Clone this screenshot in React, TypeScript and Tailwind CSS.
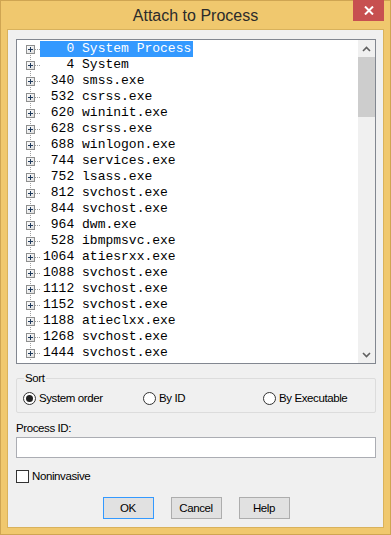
import React from 'react';

const processes: [number, string][] = [
  [0, 'System Process'],
  [4, 'System'],
  [340, 'smss.exe'],
  [532, 'csrss.exe'],
  [620, 'wininit.exe'],
  [628, 'csrss.exe'],
  [688, 'winlogon.exe'],
  [744, 'services.exe'],
  [752, 'lsass.exe'],
  [812, 'svchost.exe'],
  [844, 'svchost.exe'],
  [964, 'dwm.exe'],
  [528, 'ibmpmsvc.exe'],
  [1064, 'atiesrxx.exe'],
  [1088, 'svchost.exe'],
  [1112, 'svchost.exe'],
  [1152, 'svchost.exe'],
  [1188, 'atieclxx.exe'],
  [1268, 'svchost.exe'],
  [1444, 'svchost.exe'],
];

const uiFont = "font-['Liberation_Sans',Arial,sans-serif] text-[11.5px] tracking-[-0.4px]";

// tree gutter: expander box + dotted connectors
const TreeGutter: React.FC<{ first: boolean }> = ({ first }) => (
  <svg width="23" height="16" className="shrink-0">
    <line x1="13.5" y1={first ? 12 : 0} x2="13.5" y2="16" stroke="#a0a0a0" strokeDasharray="1 1" />
    <line x1="18" y1="8.5" x2="23" y2="8.5" stroke="#a0a0a0" strokeDasharray="1 1" />
    <defs>
      <linearGradient id="bx" x1="0" y1="0" x2="1" y2="1">
        <stop offset="0" stopColor="#ffffff" />
        <stop offset="1" stopColor="#dcdcdc" />
      </linearGradient>
    </defs>
    <rect x="9.5" y="4.5" width="8" height="8" fill="url(#bx)" stroke="#8e8f8f" />
    <line x1="11" y1="8.5" x2="16" y2="8.5" stroke="#1e395b" />
    <line x1="13.5" y1="6" x2="13.5" y2="11" stroke="#1e395b" />
  </svg>
);

const Radio: React.FC<{ checked?: boolean; label: string; w?: string }> = ({ checked, label, w }) => (
  <div className={`flex items-center gap-[3px] ${w ?? ''}`}>
    <span className="w-[13px] h-[13px] rounded-full border border-[#333333] bg-white flex items-center justify-center shrink-0">
      {checked && <span className="w-[7px] h-[7px] rounded-full bg-[#222222]" />}
    </span>
    <span className={uiFont}>{label}</span>
  </div>
);

const Button: React.FC<{ label: string; primary?: boolean }> = ({ label, primary }) => (
  <div
    className={`w-[51px] h-[22px] flex items-center justify-center bg-[#e1e1e1] border ${
      primary ? 'border-[#3399ff]' : 'border-[#adadad]'
    } ${uiFont}`}
  >
    {label}
  </div>
);

export default function App() {
  return (
    <div className="w-[391px] h-[535px] bg-[#f0c86e] border border-[#cfa552] flex flex-col text-black">
      {/* Title bar */}
      <div className="relative h-[28px] flex items-center justify-center">
        <span className="font-['Liberation_Sans',Arial,sans-serif] text-[16px] text-[#2b2b2b] pt-[1px]">
          Attach to Process
        </span>
        <div className="absolute top-[-1px] right-[6px] w-[31px] h-[21px] bg-[#c75050] flex items-center justify-center">
          <svg width="10" height="9" viewBox="0 0 10 9">
            <path d="M1 0.5 L9 8.5 M9 0.5 L1 8.5" stroke="#ffffff" strokeWidth="2" />
          </svg>
        </div>
      </div>

      {/* Client */}
      <div className="mx-[6px] h-[499px] border border-[#d9b25c] bg-[#f0f0f0] pt-[9px] pl-[8px] pr-[7px] flex flex-col">
        {/* Process tree */}
        <div className="h-[325px] border border-[#828790] bg-white flex">
          <div className="flex-1 pt-[1px] overflow-hidden">
            {processes.map(([pid, name], i) => (
              <div key={i} className="h-[16px] flex items-center">
                <TreeGutter first={i === 0} />
                <span
                  className={`h-[16px] leading-[16px] pl-[3px] pr-[2px] whitespace-pre font-['Liberation_Mono','Courier_New',monospace] text-[13px] ${
                    i === 0 ? 'bg-[#3399ff] text-white' : ''
                  }`}
                >
                  {String(pid).padStart(4, ' ')} {name}
                </span>
              </div>
            ))}
          </div>
          <div className="w-[17px] bg-[#f0f0f0] flex flex-col">
            <div className="h-[17px] flex items-center justify-center">
              <svg width="9" height="6" viewBox="0 0 9 6">
                <path d="M1 5 L4.5 1.5 L8 5" stroke="#606060" strokeWidth="1.6" fill="none" />
              </svg>
            </div>
            <div className="h-[60px] bg-[#cdcdcd]" />
            <div className="flex-1" />
            <div className="h-[17px] flex items-center justify-center">
              <svg width="9" height="6" viewBox="0 0 9 6">
                <path d="M1 1 L4.5 4.5 L8 1" stroke="#606060" strokeWidth="1.6" fill="none" />
              </svg>
            </div>
          </div>
        </div>

        {/* Sort group */}
        <fieldset className="mt-[7px] h-[42px] border border-[#dcdcdc] rounded-[2px] m-0 p-0">
          <legend className={`ml-[7px] px-[1px] leading-[14px] ${uiFont}`}>Sort</legend>
          <div className="flex items-center mt-[5px] pl-[6px]">
            <Radio checked label="System order" w="w-[120px]" />
            <Radio label="By ID" w="w-[120px]" />
            <Radio label="By Executable" />
          </div>
        </fieldset>

        {/* Process ID */}
        <div className={`mt-[8px] leading-[14px] ${uiFont}`}>Process ID:</div>
        <div className="mt-[2px] h-[21px] border border-[#abadb3] bg-white" />

        {/* Noninvasive */}
        <div className="mt-[10px] flex items-center gap-[3px]">
          <span className="w-[13px] h-[13px] border border-[#333333] bg-white shrink-0" />
          <span className={uiFont}>Noninvasive</span>
        </div>

        {/* Buttons */}
        <div className="mt-[12px] flex justify-center gap-[17px]">
          <Button label="OK" primary />
          <Button label="Cancel" />
          <Button label="Help" />
        </div>
      </div>
    </div>
  );
}
